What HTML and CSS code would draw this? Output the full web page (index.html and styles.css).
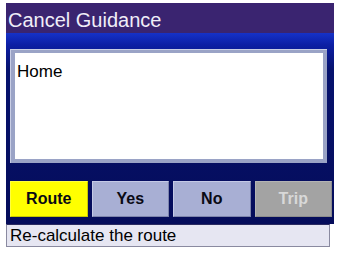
FILE: index.html
```html
<!DOCTYPE html>
<html>
<head>
<meta charset="utf-8">
<link rel="stylesheet" href="styles.css">
</head>
<body>
<div class="device">
  <div class="titlebar">Cancel Guidance</div>
  <div class="screen">
    <div class="panel">
      <div class="panel-inner">Home</div>
    </div>
    <div class="buttons">
      <div class="btn btn-active">Route</div>
      <div class="btn">Yes</div>
      <div class="btn">No</div>
      <div class="btn btn-disabled">Trip</div>
    </div>
  </div>
</div>
<div class="status">Re-calculate the route</div>
</body>
</html>
```
FILE: styles.css
```css
html, body {
  margin: 0;
  padding: 0;
  background: #ffffff;
  font-family: "Liberation Sans", Arial, sans-serif;
}
body {
  padding: 3px 0 0 6px;
  width: 340px;
  height: 254px;
  box-sizing: border-box;
}
.device {
  width: 328px;
  display: flex;
  flex-direction: column;
}
.titlebar {
  height: 30px;
  background: #3a2470;
  color: #f0eef8;
  font-size: 20px;
  line-height: 24px;
  padding: 5px 0 0 2px;
  box-sizing: border-box;
}
.screen {
  height: 191px;
  background: linear-gradient(to bottom, #1632c8 0px, #0c1ea4 12px, #06126e 36px, #050c5a 100%);
  padding: 16px 7px 0 4px;
  box-sizing: border-box;
  display: flex;
  flex-direction: column;
}
.panel {
  height: 114px;
  background: #9aa3c6;
  border-top: 1px solid #c8cde4;
  border-left: 1px solid #c8cde4;
  padding: 3px 4px 4px 4px;
  box-sizing: border-box;
  display: flex;
}
.panel-inner {
  flex: 1;
  background: #ffffff;
  color: #000000;
  font-size: 17px;
  padding: 10px 0 0 2px;
  line-height: 18px;
}
.buttons {
  margin-top: 18px;
  margin-right: -5px;
  height: 36px;
  display: flex;
  gap: 4px;
}
.btn {
  flex: 1;
  background: #a8afd4;
  border-top: 1px solid #c4c9e6;
  border-left: 1px solid #c4c9e6;
  border-bottom: 1px solid #7d84ac;
  border-right: 1px solid #7d84ac;
  color: #0a0a14;
  font-weight: bold;
  font-size: 16px;
  display: flex;
  align-items: center;
  justify-content: center;
}
.btn-active {
  background: #ffff00;
  border-color: #ffff40 #c8c800 #c8c800 #ffff40;
}
.btn-disabled {
  background: #a3a3a3;
  border-color: #b4b4b4 #8c8c8c #8c8c8c #b4b4b4;
  color: #d8d8d8;
}
.status {
  width: 324px;
  height: 23px;
  margin-top: 0;
  background: #e6e6f2;
  border: 1px solid #8a8aa0;
  border-top-color: #2a2a60;
  box-sizing: border-box;
  font-size: 17px;
  line-height: 21px;
  padding-left: 3px;
  color: #000000;
}
```
